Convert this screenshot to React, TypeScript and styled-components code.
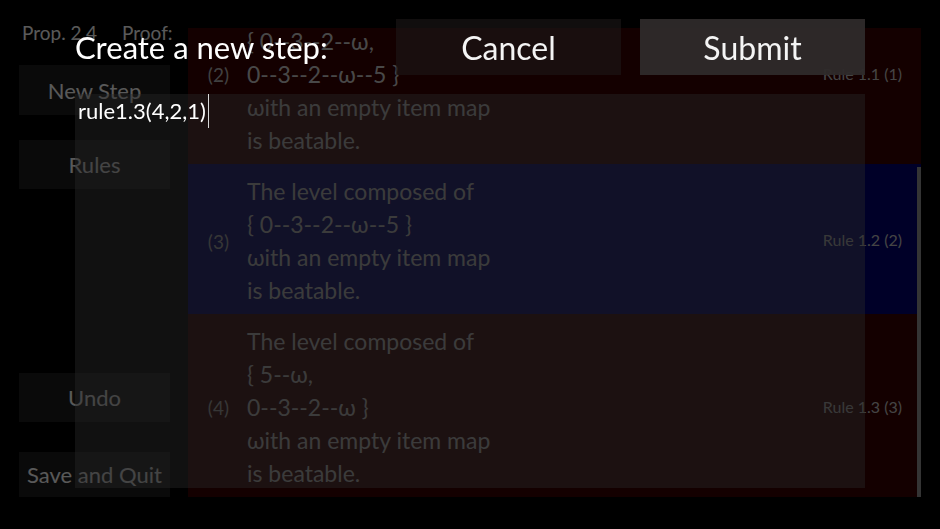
import React, { useLayoutEffect, useRef, useState } from "react";
import styled, { createGlobalStyle } from "styled-components";

const GlobalStyle = createGlobalStyle`
  html, body {
    margin: 0;
    padding: 0;
    background: #000;
  }
  body {
    font-family: Lato, "Noto Sans", "DejaVu Sans", sans-serif;
    overflow: hidden;
  }
  * { box-sizing: border-box; }
`;

const Screen = styled.div`
  display: grid;
  grid-template-columns: 151px 1fr;
  column-gap: 18px;
  height: 529px;
  padding: 20px 19px 32px 19px;
`;

const Sidebar = styled.div`
  display: flex;
  flex-direction: column;
  min-height: 0;
`;

const Heading = styled.div`
  display: flex;
  gap: 25px;
  height: 25px;
  padding-left: 3px;
  font-size: 19px;
  line-height: 25px;
  color: #fff;
  white-space: nowrap;
`;

const SideButton = styled.div<{ $h: number; $top?: string }>`
  display: flex;
  align-items: center;
  justify-content: center;
  height: ${(p) => p.$h}px;
  margin-top: ${(p) => p.$top ?? "0"};
  background: #1d1d1d;
  color: #fff;
  font-size: 22px;
  white-space: nowrap;
`;

const ListFrame = styled.div`
  position: relative;
  margin-top: 8px;
  min-height: 0;
  display: flex;
  flex-direction: column;
`;

const ProofList = styled.div`
  flex: 1;
  min-height: 0;
  overflow-y: auto;
  scrollbar-width: none;
  &::-webkit-scrollbar {
    display: none;
  }
`;

const ScrollThumb = styled.div`
  position: absolute;
  right: 0;
  width: 4px;
  background: #949494;
`;

const Row = styled.div<{ $tone: "red" | "blue" }>`
  display: flex;
  align-items: center;
  padding: 11px 19px 7px 19px;
  background: ${(p) => (p.$tone === "red" ? "#3a0000" : "#000072")};
`;

const StepNo = styled.div`
  width: 22px;
  margin-right: 18px;
  font-size: 19px;
  color: #b8b8b8;
  text-align: right;
`;

const Statement = styled.div`
  font-size: 23px;
  line-height: 33px;
  color: #cfcfcf;
`;

const RuleTag = styled.div`
  margin-left: auto;
  margin-top: -3px;
  font-size: 16px;
  color: #c4c4c4;
`;

const Backdrop = styled.div`
  position: fixed;
  inset: 0;
  display: flex;
  flex-direction: column;
  gap: 19px;
  padding: 19px 75px 41px 75px;
  background: rgba(0, 0, 0, 0.65);
`;

const DialogHeader = styled.div`
  display: flex;
  align-items: center;
  gap: 19px;
  height: 56px;
`;

const Title = styled.div`
  flex: 1;
  font-size: 31px;
  color: #fff;
  white-space: nowrap;
`;

const DialogButton = styled.div<{ $primary?: boolean }>`
  display: flex;
  align-items: center;
  justify-content: center;
  width: 225px;
  height: 100%;
  font-size: 32px;
  color: #f4f4f4;
  background: ${(p) =>
    p.$primary ? "rgba(46, 42, 42, 0.95)" : "rgba(28, 24, 24, 0.6)"};
`;

const Editor = styled.div`
  flex: 1;
  padding: 0 3px;
  background: rgba(40, 40, 40, 0.43);
  font-size: 22px;
  line-height: 34px;
  color: #fff;
  white-space: pre;
`;

const Caret = styled.span`
  display: inline-block;
  width: 1.5px;
  height: 34px;
  margin-left: 2px;
  vertical-align: top;
  background: #d8d8d8;
`;

type Step = {
  no: number;
  tone: "red" | "blue";
  lines: string[];
  rule: string;
};

const steps: Step[] = [
  {
    no: 1,
    tone: "blue",
    lines: [
      "The level composed of",
      "{ 0--3--2--ω--5 }",
      "ωith an empty item map",
      "is beatable.",
    ],
    rule: "Assumption",
  },
  {
    no: 2,
    tone: "red",
    lines: [
      "The level composed of",
      "{ 0--3--2--ω,",
      "0--3--2--ω--5 }",
      "ωith an empty item map",
      "is beatable.",
    ],
    rule: "Rule 1.1 (1)",
  },
  {
    no: 3,
    tone: "blue",
    lines: [
      "The level composed of",
      "{ 0--3--2--ω--5 }",
      "ωith an empty item map",
      "is beatable.",
    ],
    rule: "Rule 1.2 (2)",
  },
  {
    no: 4,
    tone: "red",
    lines: [
      "The level composed of",
      "{ 5--ω,",
      "0--3--2--ω }",
      "ωith an empty item map",
      "is beatable.",
    ],
    rule: "Rule 1.3 (3)",
  },
];

export default function App() {
  const listRef = useRef<HTMLDivElement>(null);
  const [thumb, setThumb] = useState({ top: 0, height: 0 });

  useLayoutEffect(() => {
    const el = listRef.current;
    if (!el) return;
    el.scrollTop = el.scrollHeight;
    const { scrollTop, scrollHeight, clientHeight } = el;
    if (scrollHeight > clientHeight) {
      setThumb({
        top: (scrollTop / scrollHeight) * clientHeight,
        height: (clientHeight / scrollHeight) * clientHeight,
      });
    }
  }, []);

  return (
    <>
      <GlobalStyle />
      <Screen>
        <Sidebar>
          <Heading>
            <span>Prop. 2.4</span>
            <span>Proof:</span>
          </Heading>
          <SideButton $h={50} $top="20px">
            New Step
          </SideButton>
          <SideButton $h={49} $top="25px">
            Rules
          </SideButton>
          <SideButton $h={49} $top="auto">
            Undo
          </SideButton>
          <SideButton $h={45} $top="30px">
            Save and Quit
          </SideButton>
        </Sidebar>
        <ListFrame>
          <ProofList ref={listRef}>
            {steps.map((s) => (
              <Row key={s.no} $tone={s.tone}>
                <StepNo>({s.no})</StepNo>
                <Statement>
                  {s.lines.map((l, i) => (
                    <div key={i}>{l}</div>
                  ))}
                </Statement>
                <RuleTag>{s.rule}</RuleTag>
              </Row>
            ))}
          </ProofList>
          {thumb.height > 0 && (
            <ScrollThumb style={{ top: thumb.top, height: thumb.height }} />
          )}
        </ListFrame>
      </Screen>
      <Backdrop>
        <DialogHeader>
          <Title>Create a new step:</Title>
          <DialogButton>Cancel</DialogButton>
          <DialogButton $primary>Submit</DialogButton>
        </DialogHeader>
        <Editor>
          rule1.3(4,2,1)
          <Caret />
        </Editor>
      </Backdrop>
    </>
  );
}
